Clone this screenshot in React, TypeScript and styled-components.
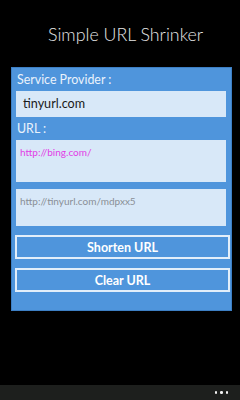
import React from "react";
import styled, { createGlobalStyle } from "styled-components";

const Global = createGlobalStyle`
  html, body { margin: 0; padding: 0; background: #000; }
  #root { height: 400px; }
`;

const Screen = styled.div`
  width: 240px;
  height: 400px;
  background: #000;
  display: flex;
  flex-direction: column;
  font-family: Lato, "Open Sans", sans-serif;
  overflow: hidden;
`;

const Header = styled.div`
  height: 67px;
  box-sizing: border-box;
  padding: 22px 0 0 48px;
  color: #e6e6e6;
  font-size: 17.8px;
  font-weight: 300;
  line-height: 24px;
`;

const Panel = styled.div`
  margin: 0 8px 0 11px;
  height: 244px;
  box-sizing: border-box;
  background: #4f95dc;
  border: 1px solid #3d7fc4;
  padding: 0 4px 0 4px;
  display: flex;
  flex-direction: column;
`;

const Label = styled.div<{ $h: number }>`
  height: ${(p) => p.$h}px;
  box-sizing: border-box;
  display: flex;
  align-items: flex-end;
  padding: 0 0 4px 1px;
  color: #eaf2fb;
  font-size: 12.4px;
  line-height: 14px;
`;

const Field = styled.div<{ $h: number; $color: string; $size: number; $pad: number }>`
  height: ${(p) => p.$h}px;
  margin-right: 1px;
  box-sizing: border-box;
  background: #d8e8f8;
  color: ${(p) => p.$color};
  font-size: ${(p) => p.$size}px;
  padding: ${(p) => p.$pad}px 0 0 ${(p) => (p.$size > 12 ? 7 : 4)}px;
  line-height: 1.2;
`;

const Gap = styled.div<{ $h: number }>`
  height: ${(p) => p.$h}px;
  flex: none;
`;

const Button = styled.div`
  height: 24px;
  margin: 0 -3px 0 -1px;
  box-sizing: border-box;
  border: 2px solid #e2eefa;
  display: flex;
  align-items: center;
  justify-content: center;
  color: #fff;
  font-size: 12.5px;
  font-weight: 700;
`;

const AppBar = styled.div`
  margin-top: auto;
  height: 15px;
  background: #1d1f1d;
  display: flex;
  justify-content: flex-end;
  align-items: center;
  padding-right: 12px;
  gap: 3px;
`;

const Dot = styled.span`
  width: 2.5px;
  height: 2.5px;
  border-radius: 50%;
  background: #f2f2f2;
`;

export default function App() {
  return (
    <>
      <Global />
      <Screen>
        <Header>Simple URL Shrinker</Header>
        <Panel>
          <Label $h={23}>Service Provider :</Label>
          <Field $h={26} $color="#1a1a1a" $size={12.6} $pad={5}>tinyurl.com</Field>
          <Label $h={23}>URL :</Label>
          <Field $h={42} $color="#e23ce6" $size={10} $pad={6}>http://bing.com/</Field>
          <Gap $h={7} />
          <Field $h={37} $color="#8a8f96" $size={10} $pad={6}>http://tinyurl.com/mdpxx5</Field>
          <Gap $h={9} />
          <Button>Shorten URL</Button>
          <Gap $h={9} />
          <Button>Clear URL</Button>
        </Panel>
        <AppBar>
          <Dot />
          <Dot />
          <Dot />
        </AppBar>
      </Screen>
    </>
  );
}
